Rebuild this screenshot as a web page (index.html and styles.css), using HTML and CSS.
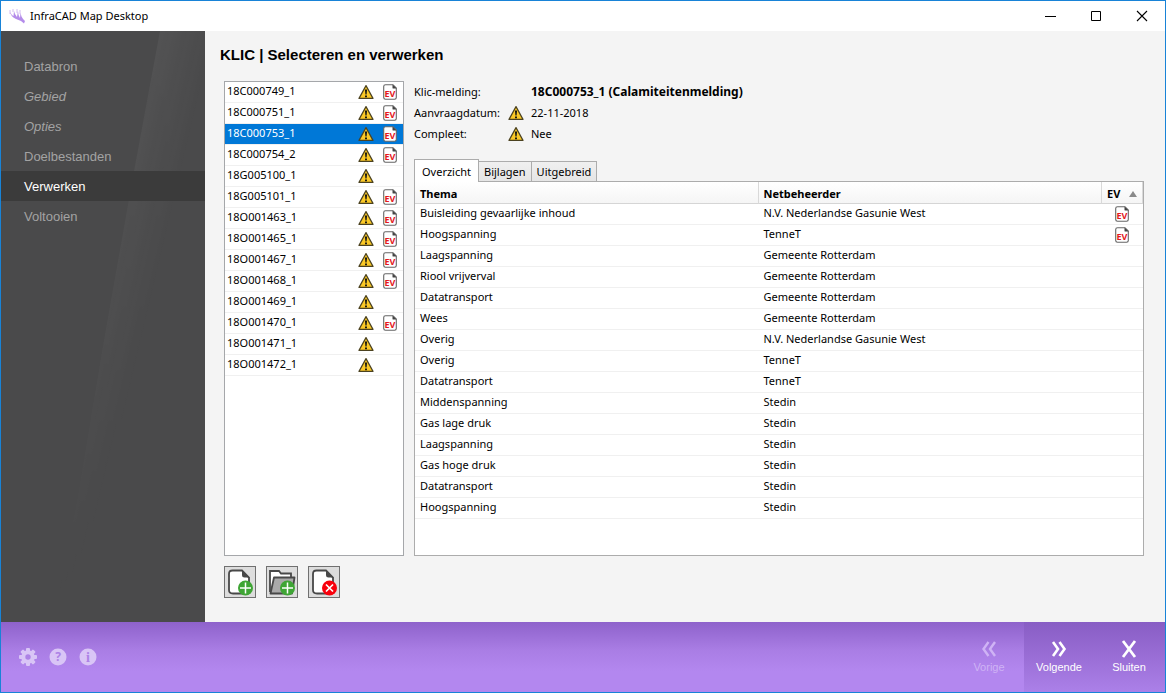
FILE: index.html
```html
<!DOCTYPE html>
<html lang="nl">
<head>
<meta charset="utf-8">
<title>InfraCAD Map Desktop</title>
<link rel="stylesheet" href="styles.css">
</head>
<body>
<svg class="defs" aria-hidden="true">
  <symbol id="warn" viewBox="0 0 16 16">
    <path d="M8 1.6 L15 14.4 H1 Z" fill="#fbc926" stroke="#4b4220" stroke-width="1.2" stroke-linejoin="round"/>
    <path d="M6.9 5.5 h2.2 l-.5 5 h-1.2z M7 11.4h2v1.8h-2z" fill="#1c1a10"/>
  </symbol>
  <symbol id="ev" viewBox="0 0 14 16">
    <path d="M2.5 .7 H10 L13.3 4 V13.6 Q13.3 15.3 11.6 15.3 H2.5 Q.7 15.3 .7 13.6 V2.5 Q.7 .7 2.5 .7Z" fill="#fff" stroke="#666" stroke-width="1.1"/>
    <path d="M9.5 .5 L13.6 4.6 H10.4 Q9.5 4.6 9.5 3.7Z" fill="#444"/>
    <text x="7" y="13" text-anchor="middle" class="ev-text">EV</text>
  </symbol>
  <symbol id="page" viewBox="0 0 30 30">
    <path d="M7.500 3.500 H17 L24 10.500 V23 Q24 26.500 20.500 26.500 H8 Q4 26.500 4 23 V7 Q4 3.500 7.500 3.500Z" fill="#fff" stroke="#484848" stroke-width="1.800"/>
    <path d="M17 3 L24.500 10.500 H19.500 Q17 10.500 17 8Z" fill="#484848"/>
  </symbol>
  <symbol id="plus" viewBox="0 0 16 16">
    <circle cx="8" cy="8" r="7.5" fill="#3fa535"/>
    <path d="M8 2.5V13.5M2.5 8H13.5" stroke="#fff" stroke-width="1.5"/>
  </symbol>
</svg>
<div class="window">
  <header class="titlebar">
    <svg class="logo" viewBox="0 0 18 16" aria-hidden="true"><path d="M2 2V6M5 1V4M9 1V5M12 2V6" stroke="#d3bcf3" stroke-width="1"/><path d="M2 4 Q3 9 8 11 L13 13 L16 15.500 L17 13 Q15 11.500 13.500 8.500 L12.500 5 L12 10 Q10 7 10 3 L9 9 Q6.500 6 6 3 L5.500 8 Q3.500 7 2 4Z" fill="#b48cea"/></svg>
    <span class="caption">InfraCAD Map Desktop</span>
    <button class="winbtn" aria-label="Minimaliseren"><svg viewBox="0 0 12 12"><path d="M1 6.500H12" stroke="#000"/></svg></button>
    <button class="winbtn" aria-label="Maximaliseren"><svg viewBox="0 0 12 12"><path d="M1.500 1.500H10.500V10.500H1.500Z" stroke="#000" fill="none"/></svg></button>
    <button class="winbtn" aria-label="Venster sluiten"><svg viewBox="0 0 12 12"><path d="M1 1L11 11M11 1L1 11" stroke="#000" stroke-width="1.1"/></svg></button>
  </header>
  <div class="body">
    <nav class="sidebar">
      <svg class="beam" viewBox="0 0 204 591" preserveAspectRatio="none" aria-hidden="true">
        <defs>
          <linearGradient id="across" gradientUnits="userSpaceOnUse" x1="125" y1="0" x2="210" y2="20"><stop offset="0" stop-color="#fff" stop-opacity=".08"/><stop offset="1" stop-color="#fff" stop-opacity="0"/></linearGradient>
          <linearGradient id="down" x1="0" y1="0" x2="0" y2="1"><stop offset="0" stop-color="#fff"/><stop offset=".5" stop-color="#bbb"/><stop offset="1" stop-color="#000"/></linearGradient>
          <mask id="fade" maskUnits="userSpaceOnUse" x="0" y="0" width="204" height="591"><rect width="204" height="591" fill="url(#down)"/></mask>
        </defs>
        <path mask="url(#fade)" d="M159 0 L133 140 L103 309 L77 464 L52 591 H90 L150 309 L204 60 V0Z" fill="url(#across)"/>
      </svg>
      <a href="#">Databron</a>
      <a href="#" class="optional">Gebied</a>
      <a href="#" class="optional">Opties</a>
      <a href="#">Doelbestanden</a>
      <a href="#" class="current" aria-current="page">Verwerken</a>
      <a href="#">Voltooien</a>
    </nav>
    <main class="main">
      <h1>KLIC | Selecteren en verwerken</h1>
      <div class="columns">
        <ul class="list">
          <li><button><span>18C000749_1</span><svg class="warn"><use href="#warn"/></svg><svg class="ev"><use href="#ev"/></svg></button></li>
          <li><button><span>18C000751_1</span><svg class="warn"><use href="#warn"/></svg><svg class="ev"><use href="#ev"/></svg></button></li>
          <li><button class="selected"><span>18C000753_1</span><svg class="warn"><use href="#warn"/></svg><svg class="ev"><use href="#ev"/></svg></button></li>
          <li><button><span>18C000754_2</span><svg class="warn"><use href="#warn"/></svg><svg class="ev"><use href="#ev"/></svg></button></li>
          <li><button><span>18G005100_1</span><svg class="warn"><use href="#warn"/></svg><svg class="ev"></svg></button></li>
          <li><button><span>18G005101_1</span><svg class="warn"><use href="#warn"/></svg><svg class="ev"><use href="#ev"/></svg></button></li>
          <li><button><span>18O001463_1</span><svg class="warn"><use href="#warn"/></svg><svg class="ev"><use href="#ev"/></svg></button></li>
          <li><button><span>18O001465_1</span><svg class="warn"><use href="#warn"/></svg><svg class="ev"><use href="#ev"/></svg></button></li>
          <li><button><span>18O001467_1</span><svg class="warn"><use href="#warn"/></svg><svg class="ev"><use href="#ev"/></svg></button></li>
          <li><button><span>18O001468_1</span><svg class="warn"><use href="#warn"/></svg><svg class="ev"><use href="#ev"/></svg></button></li>
          <li><button><span>18O001469_1</span><svg class="warn"><use href="#warn"/></svg><svg class="ev"></svg></button></li>
          <li><button><span>18O001470_1</span><svg class="warn"><use href="#warn"/></svg><svg class="ev"><use href="#ev"/></svg></button></li>
          <li><button><span>18O001471_1</span><svg class="warn"><use href="#warn"/></svg><svg class="ev"></svg></button></li>
          <li><button><span>18O001472_1</span><svg class="warn"><use href="#warn"/></svg><svg class="ev"></svg></button></li>
        </ul>
        <section class="detail">
          <dl class="facts">
            <dt>Klic-melding:</dt><dd><span class="slot"></span><b>18C000753_1 (Calamiteitenmelding)</b></dd>
            <dt>Aanvraagdatum:</dt><dd><span class="slot"><svg class="warn"><use href="#warn"/></svg></span>22-11-2018</dd>
            <dt>Compleet:</dt><dd><span class="slot"><svg class="warn"><use href="#warn"/></svg></span>Nee</dd>
          </dl>
          <div class="tabs" role="tablist">
            <button role="tab" class="tab active" aria-selected="true">Overzicht</button>
            <button role="tab" class="tab">Bijlagen</button>
            <button role="tab" class="tab">Uitgebreid</button>
          </div>
          <div class="panel">
            <table>
              <colgroup><col><col><col class="col-ev"></colgroup>
              <thead><tr><th>Thema</th><th>Netbeheerder</th><th><span class="sort">EV<svg viewBox="0 0 8 6" aria-hidden="true"><path d="M4 0L8 6H0Z" fill="#8a8a8a"/></svg></span></th></tr></thead>
              <tbody>
                <tr><td>Buisleiding gevaarlijke inhoud</td><td>N.V. Nederlandse Gasunie West</td><td class="icon"><svg class="ev"><use href="#ev"/></svg></td></tr>
                <tr><td>Hoogspanning</td><td>TenneT</td><td class="icon"><svg class="ev"><use href="#ev"/></svg></td></tr>
                <tr><td>Laagspanning</td><td>Gemeente Rotterdam</td><td></td></tr>
                <tr><td>Riool vrijverval</td><td>Gemeente Rotterdam</td><td></td></tr>
                <tr><td>Datatransport</td><td>Gemeente Rotterdam</td><td></td></tr>
                <tr><td>Wees</td><td>Gemeente Rotterdam</td><td></td></tr>
                <tr><td>Overig</td><td>N.V. Nederlandse Gasunie West</td><td></td></tr>
                <tr><td>Overig</td><td>TenneT</td><td></td></tr>
                <tr><td>Datatransport</td><td>TenneT</td><td></td></tr>
                <tr><td>Middenspanning</td><td>Stedin</td><td></td></tr>
                <tr><td>Gas lage druk</td><td>Stedin</td><td></td></tr>
                <tr><td>Laagspanning</td><td>Stedin</td><td></td></tr>
                <tr><td>Gas hoge druk</td><td>Stedin</td><td></td></tr>
                <tr><td>Datatransport</td><td>Stedin</td><td></td></tr>
                <tr><td>Hoogspanning</td><td>Stedin</td><td></td></tr>
              </tbody>
            </table>
          </div>
        </section>
      </div>
      <div class="tools">
        <button aria-label="Bestand toevoegen"><svg viewBox="0 0 30 30"><use href="#page" width="30" height="30"/><use href="#plus" x="12.500" y="13" width="16" height="16"/></svg></button>
        <button aria-label="Map toevoegen"><svg viewBox="0 0 30 30"><path d="M3 25V4H12L14 6.500H24V11" fill="#fff" stroke="#484848" stroke-width="1.800"/><path d="M7 10.500H27.500L25 26.500H3.500Z" fill="#aaa" stroke="#484848" stroke-width="1.800" stroke-linejoin="round"/><use href="#plus" x="12.500" y="13" width="16" height="16"/></svg></button>
        <button aria-label="Bestand verwijderen"><svg viewBox="0 0 30 30"><use href="#page" width="30" height="30"/><circle cx="20.500" cy="21" r="7.500" fill="#f8000c"/><path d="M17 17.500L24 24.500M24 17.500L17 24.500" stroke="#fff" stroke-width="1.700"/></svg></button>
      </div>
    </main>
  </div>
  <footer class="footer">
    <div class="round">
      <button aria-label="Instellingen"><svg viewBox="0 0 18 18"><g fill="#d9c5f6"><circle cx="9" cy="9" r="6.800"/><g id="teeth"><rect x="7" y="0" width="4" height="18" rx="1"/><rect x="0" y="7" width="18" height="4" rx="1"/></g><use href="#teeth" transform="rotate(45 9 9)"/></g><circle cx="9" cy="9" r="2.700" fill="#ad82e6"/></svg></button>
      <button aria-label="Help"><svg viewBox="0 0 18 18"><circle cx="9" cy="9" r="8.500" fill="#d9c5f6"/><text x="9" y="13" text-anchor="middle" class="glyph">?</text></svg></button>
      <button aria-label="Informatie"><svg viewBox="0 0 18 18"><circle cx="9" cy="9" r="8.500" fill="#d9c5f6"/><text x="9" y="14" text-anchor="middle" class="glyph serif">i</text></svg></button>
    </div>
    <button class="step" disabled><svg viewBox="0 0 20 20"><path d="M9.500 3L4.500 10L9.500 17M16 3L11 10L16 17" fill="none" stroke="currentColor" stroke-width="2.400"/></svg>Vorige</button>
    <div class="actions">
      <button class="step"><svg viewBox="0 0 20 20"><path d="M4 3L9 10L4 17M10.500 3L15.500 10L10.500 17" fill="none" stroke="currentColor" stroke-width="2.600"/></svg>Volgende</button>
      <button class="step"><svg viewBox="0 0 20 20"><path d="M4 2L16 18M16 2L4 18" fill="none" stroke="currentColor" stroke-width="2.800"/></svg>Sluiten</button>
    </div>
  </footer>
</div>
</body>
</html>
```
FILE: styles.css
```css
* { box-sizing: border-box; }
body { margin: 0; font: 11px/20px "Noto Sans", sans-serif; color: #000; }
button { margin: 0; padding: 0; border: 0; background: none; font: inherit; color: inherit; }
svg { display: block; }
.defs { display: none; }

.window { display: flex; flex-direction: column; min-height: 100vh; border: 1px solid #1883d7; background: #f4f4f4; }
.titlebar { display: flex; align-items: center; height: 30px; padding-left: 7px; background: #fff; }
.logo { width: 18px; height: 16px; }
.caption { flex: 1; padding-left: 4px; }
.winbtn { display: grid; place-items: center; width: 46px; height: 30px; }
.winbtn svg { width: 12px; height: 12px; }

.body { display: flex; flex: 1; }
.sidebar { position: relative; width: 204px; padding-top: 20px; background: #4a4a4b; font: 13px/30px "Liberation Sans", Arial, sans-serif; }
.beam { position: absolute; inset: 0; width: 100%; height: 100%; }
.sidebar a { position: relative; display: block; height: 30px; padding: 1px 0 0 23px; color: #a3a3a3; text-decoration: none; }
.sidebar .optional { font-style: italic; }
.sidebar .current { background: #3b3b3b; color: #fff; }

.main { display: flex; flex: 1; flex-direction: column; min-width: 0; padding: 14px 21px 24px 15px; }
h1 { margin: 0 0 16px; font: bold 15px/20px "Liberation Sans", Arial, sans-serif; }
.columns { display: flex; flex: 1; gap: 10px; padding-left: 4px; }
.list { width: 180px; margin: 0; padding: 0; border: 1px solid #a5a7aa; background: #fff; list-style: none; }
.list li { border-bottom: 1px solid #f0f0f0; }
.list button { display: flex; align-items: center; width: 100%; height: 20px; padding: 0 6px 0 2px; text-align: left; line-height: 18px; }
.list span { flex: 1; padding-bottom: 2px; }
.list .ev { margin-left: 9px; }
.list .selected { background: #0078d7; color: #fff; }
.warn { width: 16px; height: 16px; }
.ev { width: 14px; height: 16px; }
.ev-text { font: bold 9px "Noto Sans", sans-serif; fill: #e3161c; }

.detail { display: flex; flex: 1; flex-direction: column; min-width: 0; }
.facts { display: grid; grid-template-columns: 94px 1fr; grid-auto-rows: 21px; margin: 0; line-height: 21px; }
.facts dd { display: flex; align-items: center; margin: 0; }
.facts b { font-size: 12px; }
.slot { width: 23px; }

.tabs { display: flex; align-items: flex-end; margin-top: 15px; }
.tab { height: 20px; padding: 0 5px; border: 1px solid #acacac; border-left: 0; border-bottom: 0; background: linear-gradient(#f0f0f0, #e5e5e5); line-height: 19px; }
.tab.active { z-index: 1; height: 23px; margin-bottom: -1px; padding: 0 7px; border-left: 1px solid #acacac; background: #fff; }
.panel { flex: 1; border: 1px solid #acacac; background: #fff; }
table { width: 100%; table-layout: fixed; border-spacing: 0; }
.col-ev { width: 41px; }
th, td { padding: 0 5px; white-space: nowrap; }
th { height: 22px; padding-top: 2px; border-right: 1px solid #d9d9d9; border-bottom: 1px solid #d5d5d5; background: linear-gradient(#fff, #f5f5f5); line-height: 18px; text-align: left; }
td { height: 21px; border-bottom: 1px solid #f0f0f0; line-height: 18px; vertical-align: top; }
td.icon { padding: 2px 0 0 13px; }
.sort { display: flex; align-items: center; justify-content: space-between; }
.sort svg { width: 8px; height: 6px; }

.tools { display: flex; gap: 10px; margin-top: 10px; padding-left: 4px; }
.tools button { width: 32px; height: 32px; border: 1px solid #707070; background: #ddd; }

.footer { display: flex; height: 70px; background: linear-gradient(#8e62cb, #a97de4 40%, #b387ef 70%); color: #fff; }
.round { display: flex; flex: 1; align-items: center; gap: 12px; padding-left: 18px; }
.round svg { width: 18px; height: 18px; }
.glyph { font: bold 12px "Noto Sans", sans-serif; fill: #ad82e6; }
.glyph.serif { font: bold 14px "Liberation Serif", serif; }
.actions { display: flex; padding-right: 1px; background: linear-gradient(#885dc4, #9a6ed6 50%, #ab80e8); }
.step { display: flex; flex-direction: column; align-items: center; width: 70px; padding-top: 17px; font: 11px/16px "Liberation Sans", Arial, sans-serif; }
.step svg { width: 20px; height: 20px; }
.step:disabled { color: #cfb3f5; }
```
